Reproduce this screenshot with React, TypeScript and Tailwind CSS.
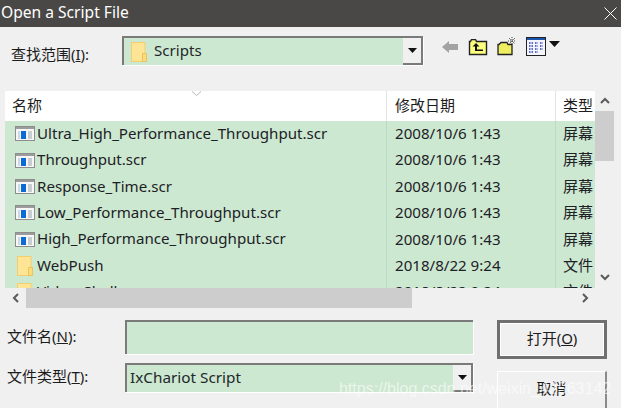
const cjk = "font-['Noto_Sans','Noto_Sans_CJK_SC',sans-serif]";

function Folder({ className = "" }: { className?: string }) {
  return (
    <svg width="16" height="20" viewBox="0 0 16 20" className={className}>
      <rect x="0.5" y="0.5" width="13.5" height="19" fill="#fde595" stroke="#f2cf6c" />
      <path d="M11.5 19.5V11.5H15.5V19.5Z" fill="#fbdc7d" stroke="#ecc25a" />
    </svg>
  );
}

function ScrIcon() {
  return (
    <svg width="20" height="16" viewBox="0 0 20 16" className="shrink-0">
      <rect x="0.5" y="0.5" width="19" height="14" fill="#f7f7f7" stroke="#8d8d8d" />
      <rect x="1" y="1" width="18" height="2" fill="#9c9c9c" />
      <rect x="6" y="5" width="5" height="8" fill="#0a6bd6" />
      <rect x="3" y="5" width="2" height="8" fill="#cfd8e2" />
      <path d="M13 6h4M13 8h4M13 10h4M13 12h4" stroke="#9aa3ad" />
    </svg>
  );
}

function Row({ name, date, type, folder }: { name: string; date: string; type: string; folder?: boolean }) {
  return (
    <div className="flex h-[26.4px] shrink-0 items-center bg-[#cde8d0] text-[15.1px] text-[#1c2127]">
      <div className="flex w-[381px] shrink-0 items-center">
        <div className="flex w-[32px] shrink-0 justify-end pr-[2px]">{folder ? <Folder className="mr-[2px]" /> : <ScrIcon />}</div>
        <span className="whitespace-nowrap pb-[2px]">{name}</span>
      </div>
      <div className="h-[26.4px] w-[169px] shrink-0 border-l border-[#b9dcc6] pl-[8px] leading-[24px]">{date}</div>
      <div className="h-[26.4px] w-[39px] shrink-0 overflow-hidden whitespace-nowrap border-l border-[#b9dcc6] pl-[7px] leading-[24px]">{type}</div>
    </div>
  );
}

function ComboArrow() {
  return (
    <div className="flex h-full w-[20px] items-center justify-center border-b-2 border-r-2 border-[#7a7a7a] bg-[#f0f0f0]">
      <svg width="9" height="5" viewBox="0 0 9 5"><path d="M0 0H9L4.5 5Z" fill="#111" /></svg>
    </div>
  );
}

function Chevron({ d }: { d: string }) {
  return (
    <svg width="10" height="10" viewBox="0 0 10 10">
      <path d={d} fill="none" stroke="#5a5a5a" strokeWidth="2" />
    </svg>
  );
}

const rows = [
  ["Ultra_High_Performance_Throughput.scr", "2008/10/6 1:43", "屏幕"],
  ["Throughput.scr", "2008/10/6 1:43", "屏幕"],
  ["Response_Time.scr", "2008/10/6 1:43", "屏幕"],
  ["Low_Performance_Throughput.scr", "2008/10/6 1:43", "屏幕"],
  ["High_Performance_Throughput.scr", "2008/10/6 1:43", "屏幕"],
];

export default function App() {
  return (
    <div className={`relative flex h-[408px] w-[621px] flex-col overflow-hidden bg-[#f0f0f0] text-[#1c1c1c] ${cjk}`}>
      <div className="flex h-[27px] shrink-0 items-center justify-between bg-[#4a4846] pl-px pr-[4px] text-[15.6px] text-white">
        <span className="pb-[2px]">Open a Script File</span>
        <svg width="13" height="13" viewBox="0 0 13 13"><path d="M0.5 0.5L12.5 12.5M12.5 0.5L0.5 12.5" stroke="#fff" strokeWidth="1" /></svg>
      </div>

      <div className="flex h-[64px] shrink-0 items-start pt-[9px]">
        <div className="w-[122px] shrink-0 pl-[11px] pt-[8px] text-[15px] leading-[20px]">查找范围(<span className="underline">I</span>):</div>
        <div className="flex h-[29px] w-[301px] shrink-0 items-center border-l-2 border-t-2 border-[#7a7a7a] bg-[#cde8d0] shadow-[1px_1px_0_#fff]">
          <Folder className="ml-[7px]" />
          <span className="ml-[7px] flex-1 pb-[3px] text-[15.1px] text-[#23282c]">Scripts</span>
          <ComboArrow />
        </div>
        <div className="ml-[19px] flex items-center">
          <svg width="17" height="12" viewBox="0 0 17 12"><path d="M0 6L7 0V3H16V9H7V12Z" fill="#a3a3a3" /></svg>
          <svg className="ml-[9px]" width="20" height="17" viewBox="0 0 20 17">
            <path d="M1.5 15.5V2.5h1l1-2h4l1 2h10v13Z" fill="#fdfd80" stroke="#222" strokeWidth="1.4" />
            <path d="M8 4L4.5 7.5H7V12h8v-1.5H9V7.5h2.5Z" fill="#111" />
          </svg>
          <svg className="ml-[9px] mb-[2px]" width="21" height="20" viewBox="0 0 21 20">
            <path d="M1 8.5h1l2-2h6l1 2h4v10H1Z" fill="#eeee60" stroke="#222" strokeWidth="1.3" />
            <path d="M15 1v8M11 5h8M12 2l6 6M18 2l-6 6" stroke="#444" strokeWidth="1" strokeDasharray="1 1" />
          </svg>
          <svg className="ml-[8px] mb-[1px]" width="20" height="19" viewBox="0 0 20 19">
            <rect x="0.5" y="0.5" width="19" height="18" fill="#f4f4ff" stroke="#222" />
            <rect x="1" y="1" width="18" height="2" fill="#1a56b0" />
            <path d="M3 6h4M9 6h3M14 6h3M3 9h4M9 9h3M14 9h3M3 12h4M9 12h3M14 12h3M3 15h4M9 15h3" stroke="#2a3fb0" strokeWidth="1.5" strokeDasharray="1.5 1" />
          </svg>
          <svg className="ml-[3px] mb-[6px]" width="11" height="6" viewBox="0 0 11 6"><path d="M0 0H11L5.5 6Z" fill="#111" /></svg>
        </div>
      </div>

      <div className="ml-[5px] flex h-[197px] w-[609px] shrink-0 bg-white">
        <div className="relative flex w-[590px] shrink-0 flex-col overflow-hidden">
          <div className="flex h-[30px] shrink-0 items-center text-[15px]">
            <div className="h-full w-[381px] pl-[7px] leading-[28px]">名称</div>
            <div className="h-full w-[169px] border-l border-[#e3e3e3] pl-[8px] leading-[28px]">修改日期</div>
            <div className="h-full w-[39px] overflow-hidden whitespace-nowrap border-l border-[#e3e3e3] pl-[7px] leading-[28px]">类型</div>
          </div>
          <svg className="absolute left-[186px] top-[0px]" width="11" height="6" viewBox="0 0 11 6"><path d="M1 0.5L5.5 4.5L10 0.5" fill="none" stroke="#b5b5b5" /></svg>
          {rows.map(([n, d, t]) => <Row key={n} name={n} date={d} type={t} />)}
          <Row name="WebPush" date="2018/8/22 9:24" type="文件" folder />
          <Row name="Video_Shell" date="2018/8/22 9:24" type="文件" folder />
        </div>
        <div className="flex w-[19px] shrink-0 flex-col bg-[#f0f0f0]">
          <div className="flex h-[20px] items-center justify-center"><Chevron d="M1 7L5 3L9 7" /></div>
          <div className="h-[50px] bg-[#cdcdcd]" />
          <div className="flex-1" />
          <div className="flex h-[22px] items-center justify-center"><Chevron d="M1 3L5 7L9 3" /></div>
        </div>
      </div>

      <div className="ml-[5px] flex h-[20px] w-[590px] shrink-0 items-center bg-[#f0f0f0]">
        <div className="flex w-[21px] justify-center"><Chevron d="M7 1L3 5L7 9" /></div>
        <div className="h-[20px] w-[386px] bg-[#cdcdcd]" />
        <div className="flex-1" />
        <div className="flex w-[21px] justify-center"><Chevron d="M3 1L7 5L3 9" /></div>
      </div>

      <div className="flex flex-1 pt-[12px]">
        <div className="flex w-[125px] shrink-0 flex-col text-[15px]">
          <div className="flex h-[34px] items-center pb-[2px] pl-[7px]">文件名(<span className="underline">N</span>):</div>
          <div className="mt-[9px] flex h-[29px] items-center pb-[2px] pl-[7px]">文件类型(<span className="underline">T</span>):</div>
        </div>
        <div className="flex w-[348px] shrink-0 flex-col">
          <div className="h-[34px] border-l-2 border-t-2 border-[#7a7a7a] bg-[#cde8d0] shadow-[1px_1px_0_#fff]" />
          <div className="mt-[9px] flex h-[29px] items-center border-l-2 border-t-2 border-[#7a7a7a] bg-[#cde8d0] pl-[3px] text-[15.3px] text-[#23282c] shadow-[1px_1px_0_#fff]">
            <span className="flex-1 pb-[2px]">IxChariot Script</span>
            <ComboArrow />
          </div>
        </div>
        <div className="ml-[24px] flex flex-col">
          <button className="h-[39px] w-[110px] border-[3px] border-[#6f6f6f] bg-[#f0f0f0] pb-[2px] text-[15px] shadow-[inset_0_0_0_1px_#fff]">打开(<span className="underline">O</span>)</button>
          <button className="mt-[12px] h-[39px] w-[110px] border-b-2 border-l border-r-2 border-t border-b-[#8a8a8a] border-l-white border-r-[#8a8a8a] border-t-white bg-[#f0f0f0] pb-[4px] text-[15px]">取消</button>
        </div>
      </div>

      <div className="pointer-events-none absolute left-[339px] top-[379px] whitespace-nowrap font-['Liberation_Sans',sans-serif] text-[16px] leading-[20px] text-white/60">https://blog.csdn.net/weixin_43563142</div>
    </div>
  );
}
